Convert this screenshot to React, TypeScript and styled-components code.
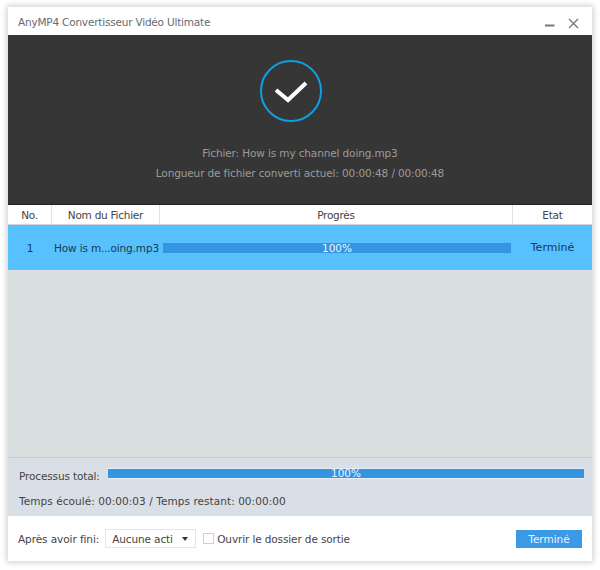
import React from "react";
import styled, { createGlobalStyle } from "styled-components";

const Global = createGlobalStyle`
  html, body { margin: 0; padding: 0; background: #fff; }
  body { font-family: "DejaVu Sans", "Noto Sans", sans-serif; font-size: 10.5px; }
`;
const Page = styled.div`
  width: 600px; height: 570px; padding: 7px 8px 9px; box-sizing: border-box; overflow: hidden;
`;
const Win = styled.div`
  width: 584px; height: 554px; display: flex; flex-direction: column; background: #fff;
  box-shadow: 0 0 6px 1px rgba(0,0,0,.22);
`;
const TitleBar = styled.div`
  height: 28px; flex: none; display: flex; align-items: center; justify-content: space-between;
  padding: 1px 13px 0 10px; box-sizing: border-box; color: #666a72; letter-spacing: -0.2px;
`;
const WinButtons = styled.div`display: flex; align-items: center; gap: 13px; margin-top: 3px;`;
const Hero = styled.div`
  height: 170px; flex: none; background: #363636; display: flex; flex-direction: column; align-items: center;
  border-bottom: 1px solid #222; box-sizing: border-box;
`;
const Badge = styled.svg`margin: 25px 18px 0 0; display: block;`;
const HeroLine = styled.div`
  color: #9c9c9c; line-height: 20px; letter-spacing: -0.125px;
  &:first-of-type { margin-top: 21px; }
`;
const HeaderRow = styled.div`
  height: 20px; flex: none; display: grid; grid-template-columns: 44px 108px 353px 79px;
  background: #fff; border-bottom: 1px solid #cfd6dc; box-sizing: border-box; color: #444; letter-spacing: -0.25px;
`;
const HeaderCell = styled.div`
  display: flex; align-items: center; justify-content: center; position: relative;
  border-right: ${p => (p.$last ? "none" : "1px solid #e2e2e2")}; box-sizing: border-box;
`;
const DataRow = styled.div`
  height: 45px; flex: none; display: grid; grid-template-columns: 44px 108px 353px 79px;
  background: #56c1fe; align-items: center; color: #183a52;
`;
const No = styled.div`text-align: center;`;
const FileName = styled.div`padding-left: 2px; white-space: nowrap; letter-spacing: -0.15px;`;
const ProgressCell = styled.div`padding: 0 2px 0 3px;`;
const Bar = styled.div`
  background: #3695e0; color: #e8f4ff; display: flex; align-items: center; justify-content: center;
  height: ${p => p.$h}px; line-height: ${p => p.$h}px; overflow: visible;
`;
const Status = styled.div`text-align: center; font-size: 11px;`;
const Empty = styled.div`height: 188px; flex: none; background: #d9dfdf; border-bottom: 1px solid #c8cfd2; box-sizing: border-box;`;
const Total = styled.div`
  height: 58px; flex: none; background: #d9dfe6; padding: 8px 8px 0 11px; box-sizing: border-box; color: #444;
`;
const TotalRow = styled.div`display: flex; align-items: flex-start; height: 18px;`;
const TotalLabel = styled.span`width: 89px; flex: none; margin-top: 4px; letter-spacing: -0.13px;`;
const TotalBar = styled.div`flex: 1; margin-top: 2px; border: 1px solid #e6edf5; border-width: 1px 0; box-sizing: border-box;`;
const Times = styled.div`margin-top: 9px; line-height: 16px; letter-spacing: 0.06px;`;
const Footer = styled.div`
  flex: 1; display: flex; align-items: center; padding: 0 10px; color: #444; letter-spacing: -0.12px;
`;
const Label = styled.span`margin-right: 6px; letter-spacing: -0.08px;`;
const Select = styled.div`
  width: 91px; height: 19px; border: 1px solid #e6e6e6; box-sizing: border-box; display: flex; align-items: center;
  padding-left: 6px; margin-right: 7px; position: relative; overflow: hidden; white-space: nowrap;
`;
const SelectText = styled.span`width: 61px; overflow: hidden; flex: none;`;
const Caret = styled.i`
  position: absolute; right: 7px; top: 7px; width: 0; height: 0;
  border-left: 3.5px solid transparent; border-right: 3.5px solid transparent; border-top: 4px solid #333;
`;
const Check = styled.span`
  width: 11px; height: 11px; box-sizing: border-box; border: 1px solid #cfcfcf; margin-right: 3px; flex: none;
`;
const Done = styled.button`
  margin-left: auto; width: 66px; height: 18px; border: none; background: #3b9ae6; color: #e8f4ff; padding: 0;
  font: inherit;
`;

export default function App() {
  return (
    <Page>
      <Global />
      <Win>
        <TitleBar>
          <span>AnyMP4 Convertisseur Vidéo Ultimate</span>
          <WinButtons>
            <svg width="10" height="12" viewBox="0 0 10 12"><path d="M0 8.5h9.5" stroke="#777" strokeWidth="2" /></svg>
            <svg width="11" height="11" viewBox="0 0 11 11"><path d="M1 1l9 9M10 1l-9 9" stroke="#777" strokeWidth="1.4" fill="none" /></svg>
          </WinButtons>
        </TitleBar>
        <Hero>
          <Badge width="62" height="62" viewBox="0 0 62 62">
            <circle cx="31" cy="31" r="30" fill="none" stroke="#0f9fe0" strokeWidth="2" />
            <path d="M16 30L28 40L46 23" fill="none" stroke="#fff" strokeWidth="4" />
          </Badge>
          <HeroLine>Fichier: How is my channel doing.mp3</HeroLine>
          <HeroLine>Longueur de fichier converti actuel: 00:00:48 / 00:00:48</HeroLine>
        </Hero>
        <HeaderRow>
          <HeaderCell>No.</HeaderCell>
          <HeaderCell>Nom du Fichier</HeaderCell>
          <HeaderCell>Progrès</HeaderCell>
          <HeaderCell $last>Etat</HeaderCell>
        </HeaderRow>
        <DataRow>
          <No>1</No>
          <FileName>How is m...oing.mp3</FileName>
          <ProgressCell><Bar $h={10}>100%</Bar></ProgressCell>
          <Status>Terminé</Status>
        </DataRow>
        <Empty />
        <Total>
          <TotalRow>
            <TotalLabel>Processus total:</TotalLabel>
            <TotalBar><Bar $h={9}>100%</Bar></TotalBar>
          </TotalRow>
          <Times>Temps écoulé: 00:00:03 / Temps restant: 00:00:00</Times>
        </Total>
        <Footer>
          <Label>Après avoir fini:</Label>
          <Select><SelectText>Aucune action</SelectText><Caret /></Select>
          <Check />
          <span>Ouvrir le dossier de sortie</span>
          <Done>Terminé</Done>
        </Footer>
      </Win>
    </Page>
  );
}
